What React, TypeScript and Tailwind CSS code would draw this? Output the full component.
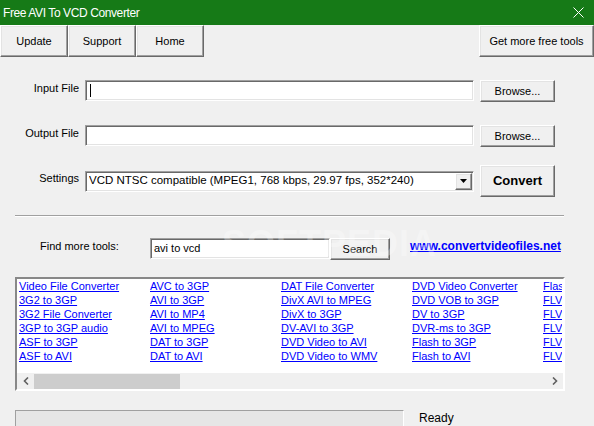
import React from "react";

const raised =
  "border border-t-white border-l-white border-r-[#696969] border-b-[#696969] shadow-[inset_-1px_-1px_0_#a0a0a0,inset_1px_1px_0_#e3e3e3] bg-[#f0f0f0]";
const sunken =
  "border border-t-[#a0a0a0] border-l-[#a0a0a0] border-r-white border-b-white shadow-[inset_1px_1px_0_#696969,inset_-1px_-1px_0_#e3e3e3] bg-white";

const cols: string[][] = [
  ["Video File Converter", "3G2 to 3GP", "3G2 File Converter", "3GP to 3GP audio", "ASF to 3GP", "ASF to AVI"],
  ["AVC to 3GP", "AVI to 3GP", "AVI to MP4", "AVI to MPEG", "DAT to 3GP", "DAT to AVI"],
  ["DAT File Converter", "DivX AVI to MPEG", "DivX to 3GP", "DV-AVI to 3GP", "DVD Video to AVI", "DVD Video to WMV"],
  ["DVD Video Converter", "DVD VOB to 3GP", "DV to 3GP", "DVR-ms to 3GP", "Flash to 3GP", "Flash to AVI"],
  ["Flash", "FLV ", "FLV ", "FLV ", "FLV ", "FLV "],
];

export default function App() {
  return (
    <div
      className="relative w-[594px] h-[426px] overflow-hidden bg-[#f0f0f0] text-[11px] text-black"
      style={{ fontFamily: '"Liberation Sans", Arial, sans-serif' }}
    >
      {/* Title bar */}
      <div className="h-[25px] bg-[#167a17] flex items-center justify-between pl-[3px] pr-[10px] text-white">
        <span className="text-[12px] tracking-[-0.4px] leading-none">Free AVI To VCD Converter</span>
        <svg width="11" height="11" viewBox="0 0 11 11">
          <path d="M0.5 0.5 L10.5 10.5 M10.5 0.5 L0.5 10.5" stroke="white" strokeWidth="1" />
        </svg>
      </div>

      {/* Toolbar */}
      <div className="h-[32px] flex">
        <button className={`${raised} w-[68px] h-full text-[11px]`}>Update</button>
        <button className={`${raised} w-[68px] h-full text-[11px]`}>Support</button>
        <button className={`${raised} w-[68px] h-full text-[11px]`}>Home</button>
        <button className={`${raised} ml-auto w-[115px] h-full text-[11px]`}>Get more free tools</button>
      </div>

      {/* Form */}
      <div className="pt-[23px]">
        <div className="flex h-[22px] items-start">
          <div className="w-[79px] text-right pt-[1px] leading-[14px]">Input File</div>
          <div className={`${sunken} ml-[6px] w-[389px] h-[21px] flex items-center pl-[4px]`}>
            <div className="w-px h-[13px] bg-black" />
          </div>
          <button className={`${raised} ml-[6px] w-[75px] h-[22px]`}>Browse...</button>
        </div>

        <div className="flex h-[22px] items-start mt-[23px]">
          <div className="w-[79px] text-right pt-[1px] leading-[14px]">Output File</div>
          <div className={`${sunken} ml-[6px] w-[389px] h-[21px]`} />
          <button className={`${raised} ml-[6px] w-[75px] h-[22px]`}>Browse...</button>
        </div>

        <div className="flex h-[32px] items-center mt-[18px]">
          <div className="w-[79px] text-right leading-[14px] -mt-[6px]">Settings</div>
          <div className={`${sunken} ml-[6px] w-[389px] h-[21px] flex items-center pl-[3px] pr-px`}>
            <span className="flex-1 text-[11.5px] whitespace-nowrap overflow-hidden">
              VCD NTSC compatible (MPEG1, 768 kbps, 29.97 fps, 352*240)
            </span>
            <div className={`${raised} w-[17px] h-[17px] flex items-center justify-center`}>
              <svg width="7" height="4" viewBox="0 0 7 4">
                <path d="M0 0 H7 L3.5 4 Z" fill="black" />
              </svg>
            </div>
          </div>
          <button className={`${raised} ml-[6px] w-[75px] h-[32px] font-bold text-[13px]`}>Convert</button>
        </div>

        {/* Separator */}
        <div className="mt-[18px] ml-[15px] w-[549px] h-px bg-[#a0a0a0]" />
        <div className="ml-[15px] w-[549px] h-px bg-white" />

        {/* Find more tools */}
        <div className="flex h-[22px] items-start mt-[21px]">
          <div className="ml-[40px] w-[110px] pt-[1px] leading-[14px]">Find more tools:</div>
          <div className={`${sunken} w-[180px] h-[21px] flex items-center pl-[3px]`}>avi to vcd</div>
          <button className={`${raised} w-[60px] h-[22px]`}>Search</button>
          <a className="ml-[20px] pt-[1px] font-bold text-[12px] leading-[14px] text-[#0000ff] underline">
            www.convertvideofiles.net
          </a>
        </div>

        {/* List box */}
        <div className="mt-[17px] ml-[15px] w-[550px] h-[114px] border-2 border-t-[#888888] border-l-[#888888] border-r-white border-b-white bg-white flex flex-col">
          <div className="flex-1 overflow-hidden flex pl-[2px] pt-0">
            {cols.map((c, i) => (
              <div
                key={i}
                className={i === 4 ? "w-[19px] shrink-0 overflow-hidden flex flex-col" : "w-[131px] shrink-0 flex flex-col"}
              >
                {c.map((t, j) => (
                  <a key={j} className="h-[14px] leading-[14px] text-[#0000ff] underline whitespace-pre">
                    {t}
                  </a>
                ))}
              </div>
            ))}
          </div>
          <div className="h-[16px] bg-[#f0f0f0] flex items-center">
            <div className="w-[17px] h-full flex items-center justify-center">
              <svg width="6" height="8" viewBox="0 0 6 8">
                <path d="M5 0.5 L1.5 4 L5 7.5" stroke="#606060" strokeWidth="1.6" fill="none" />
              </svg>
            </div>
            <div className="w-[146px] h-[15px] bg-[#cdcdcd]" />
            <div className="ml-auto w-[17px] h-full flex items-center justify-center">
              <svg width="6" height="8" viewBox="0 0 6 8">
                <path d="M1 0.5 L4.5 4 L1 7.5" stroke="#606060" strokeWidth="1.6" fill="none" />
              </svg>
            </div>
          </div>
        </div>

        {/* Status */}
        <div className="flex items-start mt-[19px]">
          <div className="ml-[15px] w-[389px] h-[20px] border border-t-[#a0a0a0] border-l-[#a0a0a0] border-r-white border-b-white bg-[#e6e6e6]" />
          <div className="ml-[15px] pt-[1px] text-[12px] leading-[14px]">Ready</div>
        </div>
      </div>

      {/* Watermark */}
      <div className="absolute left-[222px] top-[226px] text-[36px] font-bold text-white/30 tracking-[1px] pointer-events-none select-none leading-none">
        SOFTPEDIA
      </div>
    </div>
  );
}
